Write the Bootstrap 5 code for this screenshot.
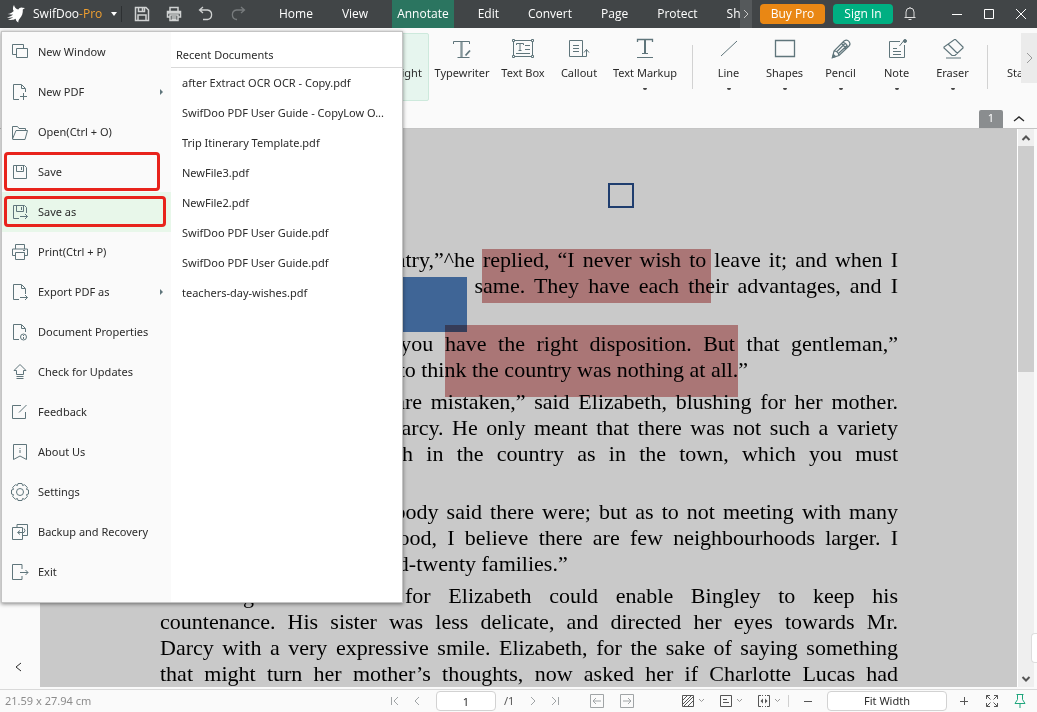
<!DOCTYPE html>
<html lang="en">
<head>
<meta charset="utf-8">
<meta name="viewport" content="width=device-width, initial-scale=1">
<title>SwifDoo PDF</title>
<link href="https://cdn.jsdelivr.net/npm/bootstrap@5.3.0/dist/css/bootstrap.min.css" rel="stylesheet">
<style>
:root{--ink:#2b2b2b;--line:#5f757b}
body{font:11px/16px "Noto Sans","Open Sans",sans-serif;color:var(--ink);background:#fafafa;height:100vh}
button{font:inherit;color:inherit;background:none;border:0;padding:0;white-space:nowrap;flex:none}
svg{display:block;fill:none;stroke:currentColor;flex:none}
.titlebar{height:28px;background:#414547;color:#fff;font:12px/16px "Open Sans","Noto Sans",sans-serif}
.brand{width:122px;height:16px;padding-left:6px;border-right:1px solid #2d3032}
.brand b{color:#f0a030;font-weight:400}
.brand svg.bird{margin-right:7px}
.quick button{width:32px}
.quick{margin-left:4px;color:#d0d2d2}
.quick .dim{color:#777b7d}
.tabs{gap:19px;margin-left:20px;min-width:0}
.tabs a{padding:6px 5px;line-height:16px;color:#fff;text-decoration:none;white-space:nowrap}
.tabs a.active{background:#2b7560}
.more{width:12px;background:#55595b;color:#c8c8c8}
.pill{height:20px;border-radius:4px;color:#fff}
.buy{width:65px;background:#e98714}
.signin{width:60px;background:#00af82}
.wins{margin-left:14px}
.wins button{width:32px}
.ribbon{height:101px;padding:5px 0 0 367px;gap:1px;border-bottom:1px solid #c4c4c4}
.tool{width:55px;height:68px;padding-top:3px;color:var(--ink);display:flex;flex-direction:column;align-items:center}
.tool svg{color:var(--line)}
.tool span{margin-top:5px}
.tool.hl{width:62px;background:#e6f5ee;border:1px solid #cde9dc;border-radius:2px;margin-right:2px;padding-top:2px}
.tool.w60{width:60px}.tool.w50{width:50px}.tool.w80{width:80px}
.caret{width:4px;height:2px;background:#444;margin-top:7px;border-radius:0 0 2px 2px}
.rule{width:1px;background:#d2d2d2;height:44px;margin:12px 7px 0 6px;flex:none}
.tool.stamp{padding-top:27px}
.scrollmore{right:0;top:5px;width:16px;height:50px;background:#ebebeb;color:#999}
.pagetag{right:34px;bottom:0;width:24px;height:18px;background:#8a8d8f;color:#fff;border-radius:2px 2px 0 0;line-height:16px;text-align:center}
.fold{right:12px;bottom:4px}
.side{width:40px;padding:0 0 14px 13px}
.sheet{background:#c9c9c9;padding:118px 119px 0 120px;font:22px/26px "Liberation Serif",serif;color:#000}
.sheet p{margin:0 0 6px}
.sheet p span{display:block;text-align:justify;text-align-last:justify;white-space:nowrap}
.sheet p span:first-child{padding-left:22px}
.sheet p span.end{text-align-last:left}
.markup{position:absolute}
.red{background:#d89696;mix-blend-mode:multiply}
.red1{left:442px;top:120px;width:229px;height:54px}
.red2{left:405px;top:196px;width:293px;height:72px}
.blue{left:340px;top:148px;width:87px;height:55px;background:#3f6596}
.box{left:568px;top:54px;width:26px;height:25px;border:2px solid #1f3d6e}
.vbar{width:20px;background:#efefef;border-left:1px solid #fff;border-right:3px solid #fafafa;color:#555}
.thumb{height:226px;background:#cdcdcd}
.vbar button{height:17px}
.handle{right:0;bottom:24px;width:6px;height:30px;background:#fff;border:1px solid #ddd;border-right:0;border-radius:4px 0 0 4px}
.status{height:23px;border-top:1px solid #d9d9d9;color:#555;margin-top:2px}
.size{width:384px;padding-left:5px;color:#8c8c8c}
.status button{height:20px}
.w22{width:22px}.w30{width:30px}.w38{width:38px}.w34{width:34px}
.pale{color:#a0a4a6}
.pin{color:#1fa67d}
.field{height:20px;border:1px solid #d2d2d2;border-radius:4px;background:#fff;text-align:center;font:inherit;color:var(--ink);padding:0}
select.field{appearance:none;width:120px;text-align-last:center}
input.field{width:60px}
.filemenu{left:1px;top:31px;width:402px;height:572px;background:#fff;border:1px solid #c4c4c4;box-shadow:0 1px 4px #0007;z-index:5}
.cmds{width:169px;background:#fafafa;color:var(--line)}
.cmds button{position:relative;height:40px;width:100%;padding-left:8px;text-align:left}
.cmds button span{margin-left:8px;color:var(--ink)}
.cmds i{width:0;height:0;border:3px solid transparent;border-left-color:var(--line);margin:0 5px 0 auto}
.cmds .current{background:#e8f7ea}
.ring::after{content:"";position:absolute;border:3px solid #e8231c;border-radius:4px;left:2px;top:0;width:156px;height:39px}
.ring.current::after{top:4px;width:162px;height:31px}
.recent h2{font:inherit;margin:0;padding:15px 0 4px 5px;border-bottom:1px solid #d9d9d9}
.recent a{display:block;height:30px;line-height:30px;padding-left:11px;color:var(--ink);text-decoration:none;white-space:nowrap}
</style>
</head>
<body class="d-flex flex-column overflow-hidden position-relative">

<header class="titlebar d-flex align-items-center flex-shrink-0">
  <div class="brand d-flex align-items-center flex-shrink-0">
    <svg class="bird" width="20" height="20" viewBox="0 0 20 20" style="fill:#fff;stroke:none"><path d="M8 1c.6 2.600 2 4.200 4.300 4.600.8-1.500 2.400-2.300 4-1.900l2.700.3-2.200 1.600c.3 3.500-.8 6.800-3 8.800-.9.900-1.500 2.200-1.500 4.100-1.600-.9-2.400-2.200-2.600-3.800-2.200 1.300-5.300 1.500-7.700.8 2.300-.4 4.200-1.300 5.200-2.400-2 .7-4.400.8-6.200.3 2.500-.6 4.800-1.700 6-3-1.800.3-3.800.2-5.500-.3 2.600-.4 4.900-1.500 6.200-3.100C6.500 5.500 6.800 3 8 1z"/></svg>
    <span>SwifDoo<b>-Pro</b></span>
    <svg class="ms-2" width="8" height="5" style="fill:#fff;stroke:none"><path d="M1 0h6L4 4z"/></svg>
  </div>
  <div class="quick d-flex align-items-center">
    <button aria-label="Save"><svg class="mx-auto" width="16" height="16" stroke-width="1.500"><path d="M1.500 1.500h10.500l2.500 2.500v10.500h-13zM4.500 1.500v4h6v-4M4 14V9h8v5M8.500 2v3"/></svg></button>
    <button aria-label="Print"><svg class="mx-auto" width="16" height="16" stroke-width="1.500"><path d="M4 5V1.500h8V5M4 11H1.500V5.500h13V11H12M4 9h8v5.500H4zM5.500 11h5M5.500 13h5M2 7h12"/></svg></button>
    <button aria-label="Undo"><svg class="mx-auto" width="16" height="16" stroke-width="1.300"><path d="M5 1 1.500 4 5 7M2 4h7.500a4.800 4.800 0 0 1 0 9.500H5"/></svg></button>
    <button aria-label="Redo" class="dim"><svg class="mx-auto" width="16" height="16" stroke-width="1.300"><path d="M11 1l3.500 3L11 7M14 4H6.500a4.800 4.800 0 0 0 0 9.500H7"/></svg></button>
  </div>
  <nav class="tabs d-flex overflow-hidden flex-grow-1" aria-label="Ribbon tabs">
    <a href="#">Home</a><a href="#">View</a><a href="#" class="active">Annotate</a><a href="#">Edit</a><a href="#">Convert</a><a href="#">Page</a><a href="#">Protect</a><a href="#" class="pe-0">Sh</a>
  </nav>
  <button class="more align-self-stretch" aria-label="More tabs"><svg width="12" height="10"><path d="M4 1l4 4-4 4"/></svg></button>
  <button class="pill buy ms-2">Buy Pro</button>
  <button class="pill signin ms-2">Sign In</button>
  <button class="w34" aria-label="Notifications"><svg class="mx-auto" width="14" height="16" style="color:#ddd"><path d="M1.500 11.500h11M3 11.500V6a4 4 0 0 1 8 0v5.500M7 1v1M5.500 13.500h3"/></svg></button>
  <div class="wins d-flex">
    <button aria-label="Minimize"><svg class="mx-auto" width="12" height="12"><path d="M1 6.500h10"/></svg></button>
    <button aria-label="Maximize"><svg class="mx-auto" width="12" height="12"><path d="M1.500 1.500h9v9h-9z"/></svg></button>
    <button aria-label="Close"><svg class="mx-auto" width="12" height="12"><path d="M1 1l10 10M11 1 1 11"/></svg></button>
  </div>
</header>

<section class="ribbon position-relative d-flex flex-shrink-0 overflow-hidden">
  <button class="tool hl"><svg width="24" height="24"><path d="M4 20h10M6 15l6-8"/></svg><span>Highlight</span></button>
  <button class="tool w60"><svg width="24" height="24"><path d="M3.500 8V5.500h16V8M11 6v15M12 6v15M7.500 21.500h12"/><path stroke-width="1.800" d="M15.500 19.500l4.500-5"/></svg><span>Typewriter</span></button>
  <button class="tool w60"><svg width="24" height="24"><path d="M2.500 4.500h19v16h-19zM5.500 9V7.500h7V9M9 8v6.500M7.500 14.500h3M14 9.500h5M14 13.500h5M5 17.500h14"/><path fill="#fafafa" d="M1.500 3.500h2v2h-2zM20.500 3.500h2v2h-2zM1.500 19.500h2v2h-2zM20.500 19.500h2v2h-2z"/></svg><span>Text Box</span></button>
  <button class="tool w50"><svg width="24" height="24"><path d="M2.500 4.500h13v16h-13zM6 9.500h6M6 12.500h6M6 15.500h6M15 20.500h4.500V13.500M17 16.500l2.500-3 2.500 3"/></svg><span>Callout</span></button>
  <button class="tool w80"><svg width="24" height="24"><path stroke-width="1.300" d="M4.500 6V3.500h15V6"/><path stroke-width="2" d="M12 4v14"/><path d="M9 17.500h6M4 21.500h16"/></svg><span>Text Markup</span><div class="caret"></div></button>
  <div class="rule"></div>
  <button class="tool"><svg width="24" height="24"><path d="M4 20 20 5"/></svg><span>Line</span><div class="caret"></div></button>
  <button class="tool"><svg width="24" height="24"><path d="M2.500 4.500h19v16h-19z" stroke-width="1.300"/></svg><span>Shapes</span><div class="caret"></div></button>
  <button class="tool"><svg width="24" height="24" stroke-width="1.200"><path d="M3.500 21.500 5 15 15 5q3-2 5 .5T20 10L10 19.500zM5 15q4 0 5 4.500M13.500 6.500q4 0 5 5M7.500 16 16 7.500M9 18l9.500-9M12.500 7.500l5 5"/><path fill="currentColor" d="M3.500 21.500l1-3 2 2z"/></svg><span>Pencil</span><div class="caret"></div></button>
  <button class="tool"><svg width="24" height="24"><path d="M15 5.500H4.500v16h15V9M8 12.500h4M8 15.500h8M8 18.500h8M14.500 10l4-5"/><circle cx="20" cy="5" r="1.500" fill="currentColor"/></svg><span>Note</span><div class="caret"></div></button>
  <button class="tool"><svg width="24" height="24" stroke-width="1.200"><path d="M13.500 3.500h1l7.500 7.500v1l-8 7.500h-3l-8-7.500v-1zM7.500 8.500l9 9M5 22h15"/></svg><span>Eraser</span><div class="caret"></div></button>
  <div class="rule"></div>
  <button class="tool stamp"><span>Stamp</span></button>
  <button class="scrollmore position-absolute" aria-label="More tools"><svg width="16" height="12"><path d="M6 1l5 5-5 5"/></svg></button>
  <div class="pagetag position-absolute">1</div>
  <button class="fold position-absolute" aria-label="Collapse ribbon"><svg width="12" height="10" stroke-width="1.400"><path d="M1 7l5-4 5 4"/></svg></button>
</section>

<main class="d-flex flex-grow-1 position-relative overflow-hidden">
  <aside class="side d-flex align-items-end flex-shrink-0"><button aria-label="Collapse panel"><svg width="10" height="12"><path d="M8 2 3 6l5 4"/></svg></button></aside>
  <article class="sheet flex-grow-1 position-relative overflow-hidden">
    <p><span>“When I am in the country,”^he replied, “I never wish to leave it; and when I</span><span>am in town it is pretty much the same. They have each their advantages, and I</span><span class="end">can be equally happy in either.”</span></p>
    <p><span>“Aye—that is because you have the right disposition. But that gentleman,”</span><span class="end">looking at Darcy, “seemed to think the country was nothing at all.”</span></p>
    <p><span>“Indeed, Mamma, you are mistaken,” said Elizabeth, blushing for her mother.</span><span>“You quite mistook Mr. Darcy. He only meant that there was not such a variety</span><span>of people to be met with in the country as in the town, which you must</span><span class="end">acknowledge to be true.”</span></p>
    <p><span>“Certainly, my dear, nobody said there were; but as to not meeting with many</span><span>people in this neighbourhood, I believe there are few neighbourhoods larger. I</span><span class="end">know we dine with four-and-twenty families.”</span></p>
    <p><span>Nothing but concern for Elizabeth could enable Bingley to keep his</span><span>countenance. His sister was less delicate, and directed her eyes towards Mr.</span><span>Darcy with a very expressive smile. Elizabeth, for the sake of saying something</span><span>that might turn her mother’s thoughts, now asked her if Charlotte Lucas had</span></p>
    <div class="markup blue"></div><div class="markup red red1"></div><div class="markup red red2"></div><div class="markup box"></div>
  </article>
  <div class="vbar d-flex flex-column flex-shrink-0">
    <button aria-label="Scroll up"><svg class="mx-auto" width="10" height="8" stroke-width="2"><path d="M1.500 6 5 2.500 8.500 6"/></svg></button>
    <div class="thumb"></div>
    <button class="mt-auto" aria-label="Scroll down"><svg class="mx-auto" width="10" height="8" stroke-width="2"><path d="M1.500 2 5 5.500 8.500 2"/></svg></button>
  </div>
  <div class="handle position-absolute"></div>
</main>

<footer class="status d-flex align-items-center flex-shrink-0">
  <div class="size">21.59 x 27.94 cm</div>
  <button class="w22 pale" aria-label="First page"><svg class="mx-auto" width="10" height="10"><path d="M1.500 1v8M8 1 4 5l4 4"/></svg></button>
  <button class="w22 pale" aria-label="Previous page"><svg class="mx-auto" width="10" height="10"><path d="M7 1 3 5l4 4"/></svg></button>
  <input class="field ms-2" value="1" aria-label="Page number"><span class="ms-2">/1</span>
  <button class="w22 pale ms-2" aria-label="Next page"><svg class="mx-auto" width="10" height="10"><path d="M3 1l4 4-4 4"/></svg></button>
  <button class="w22 pale" aria-label="Last page"><svg class="mx-auto" width="10" height="10"><path d="M2 1l4 4-4 4M8.500 1v8"/></svg></button>
  <button class="w30 pale ms-3" aria-label="Back"><svg class="mx-auto" width="14" height="14"><path d="M.5.5h13v13H.5zM11 7H3M6 4 3 7l3 3"/></svg></button>
  <button class="w30 pale" aria-label="Forward"><svg class="mx-auto" width="14" height="14"><path d="M.5.5h13v13H.5zM3 7h8M8 4l3 3-3 3"/></svg></button>
  <div class="d-flex align-items-center ms-auto">
    <button class="w38" aria-label="Background"><svg width="26" height="12"><path d="M.5.5h11v11H.5zM1 5l4-4M1 9l8-8M2 11l9-9M6 11l5-5"/><path stroke="#999" d="M17 4l2.500 2.500L22 4"/></svg></button>
    <button class="w38" aria-label="Page layout"><svg width="26" height="12"><path d="M.5.5h11v11H.5zM3 4.500h4M3 7.500h6"/><path stroke="#999" d="M17 4l2.500 2.500L22 4"/></svg></button>
    <button class="w30" aria-label="Fit"><svg width="26" height="12"><path d="M3 .5H.5v11H3M9 .5h2.500v11H9M4 .5h1M7 .5h1M4 11.500h1M7 11.500h1"/><path fill="currentColor" stroke="none" d="M5 3.500v5L2.500 6zM7 3.500v5L9.500 6z"/><path stroke="#999" d="M17 4l2.500 2.500L22 4"/></svg></button>
    <div class="vr my-1"></div>
    <button class="w38" aria-label="Zoom out"><svg class="mx-auto" width="10" height="10"><path d="M1 5.500h8"/></svg></button>
    <select class="field" aria-label="Zoom"><option>Fit Width</option></select>
    <button class="w34" aria-label="Zoom in"><svg class="mx-auto" width="10" height="10"><path d="M1 5.500h8M5.500 1v8"/></svg></button>
    <button class="w22" aria-label="Full screen"><svg class="mx-auto" width="12" height="12"><path d="M4 .5H.5V4M.5.500l4 4M8 .5h3.500V4M11.500.500l-4 4M4 11.500H.5V8M.5 11.500l4-4M8 11.500h3.500V8M11.500 11.500l-4-4"/></svg></button>
    <button class="w34 pin" aria-label="Pin"><svg class="mx-auto" width="12" height="14"><path d="M2.500.5h7M3.500.5v5l-2.500 4h10l-2.500-4v-5M6 9.500V14"/></svg></button>
  </div>
</footer>

<div class="filemenu position-absolute d-flex">
  <div class="cmds flex-shrink-0" role="group" aria-label="File commands">
    <button class="d-flex align-items-center"><svg width="20" height="20"><path d="M6 12.500H2.500v-10h11V6M6.500 6.500h11v9h-11z"/></svg><span>New Window</span></button>
    <button class="d-flex align-items-center"><svg width="20" height="20"><path d="M9 17.500H3.500v-15h8l4 4V10M11.500 3v3.500H15M13.500 11v7M10 14.500h7"/></svg><span>New PDF</span><i></i></button>
    <button class="d-flex align-items-center"><svg width="20" height="20"><path d="M2.500 17V4.500h5l1.500 2h6.500v2M2.500 17 6 8.500h11.500L15 17.500H2.500"/></svg><span>Open(Ctrl + O)</span></button>
    <button class="d-flex align-items-center ring"><svg width="20" height="20"><path d="M3.500 3.500h11l2 2v11h-13zM6.500 4v5.500h7V4M11.500 5v3"/></svg><span>Save</span></button>
    <button class="d-flex align-items-center ring current"><svg width="20" height="20"><path d="M9 16.500H3.500v-13h11l2 2V11M6.500 4v5.500h7V4M11.500 5v3M10 14.500h7.500M15 12l2.500 2.500L15 17"/></svg><span>Save as</span></button>
    <button class="d-flex align-items-center"><svg width="20" height="20"><path d="M5.500 7V2.500h9V7M5.500 13.500h-3v-6.500h15v6.500h-3M5.500 10.500h9v7h-9zM13 8.500h2"/></svg><span>Print(Ctrl + P)</span></button>
    <button class="d-flex align-items-center"><svg width="20" height="20"><path d="M9 17.500H3.500v-15h8l4 4V12M11.500 3v3.500H15M10 15.500h7.500M15 13l2.500 2.500L15 18"/></svg><span>Export PDF as</span><i></i></button>
    <button class="d-flex align-items-center"><svg width="20" height="20"><path d="M9 17.500H3.500v-15h8l4 4V10M11.500 3v3.500H15M13.500 13v1M13.500 15v2"/><circle cx="13.500" cy="15" r="3"/></svg><span>Document Properties</span></button>
    <button class="d-flex align-items-center"><svg width="20" height="20"><path d="M10 2.500l6 6h-2.500v4h-7v-4H4zM6.500 14.500h7M6.500 16.500h7"/></svg><span>Check for Updates</span></button>
    <button class="d-flex align-items-center"><svg width="20" height="20"><path d="M11 3.500H2.500v13h13V10M9 10.500 16.500 3"/></svg><span>Feedback</span></button>
    <button class="d-flex align-items-center"><svg width="20" height="20"><path d="M3.500 2.500h13v15L10 14l-6.500 3.500zM10 6v1M10 8v3"/></svg><span>About Us</span></button>
    <button class="d-flex align-items-center"><svg width="20" height="20"><circle cx="10" cy="10" r="3.500"/><path d="M8 1.500h4l.6 2 2-.8 2.700 2.700-.8 2 2 .6v4l-2 .6.8 2-2.700 2.700-2-.8-.6 2H8l-.6-2-2 .8-2.700-2.700.8-2-2-.6V8l2-.6-.8-2 2.700-2.700 2 .8z"/></svg><span>Settings</span></button>
    <button class="d-flex align-items-center"><svg width="20" height="20"><path d="M2.500 5.500h10v12h-10zM7 5V2.500h10.500v11H13M8 10.500h6q2-1.500 0-4M10 8.500l-2.500 2 2.500 2"/></svg><span>Backup and Recovery</span></button>
    <button class="d-flex align-items-center"><svg width="20" height="20"><path d="M12 7V2.500H2.500v15H12V14M10 10.500h8M15.500 8l2.500 2.500-2.500 2.500"/></svg><span>Exit</span></button>
  </div>
  <div class="recent flex-grow-1">
    <h2>Recent Documents</h2>
    <a href="#">after Extract OCR OCR - Copy.pdf</a><a href="#">SwifDoo PDF User Guide - CopyLow O...</a><a href="#">Trip Itinerary Template.pdf</a><a href="#">NewFile3.pdf</a><a href="#">NewFile2.pdf</a><a href="#">SwifDoo PDF User Guide.pdf</a><a href="#">SwifDoo PDF User Guide.pdf</a><a href="#">teachers-day-wishes.pdf</a>
  </div>
</div>
<script src="https://cdn.jsdelivr.net/npm/bootstrap@5.3.0/dist/js/bootstrap.bundle.min.js"></script>
</body>
</html>
